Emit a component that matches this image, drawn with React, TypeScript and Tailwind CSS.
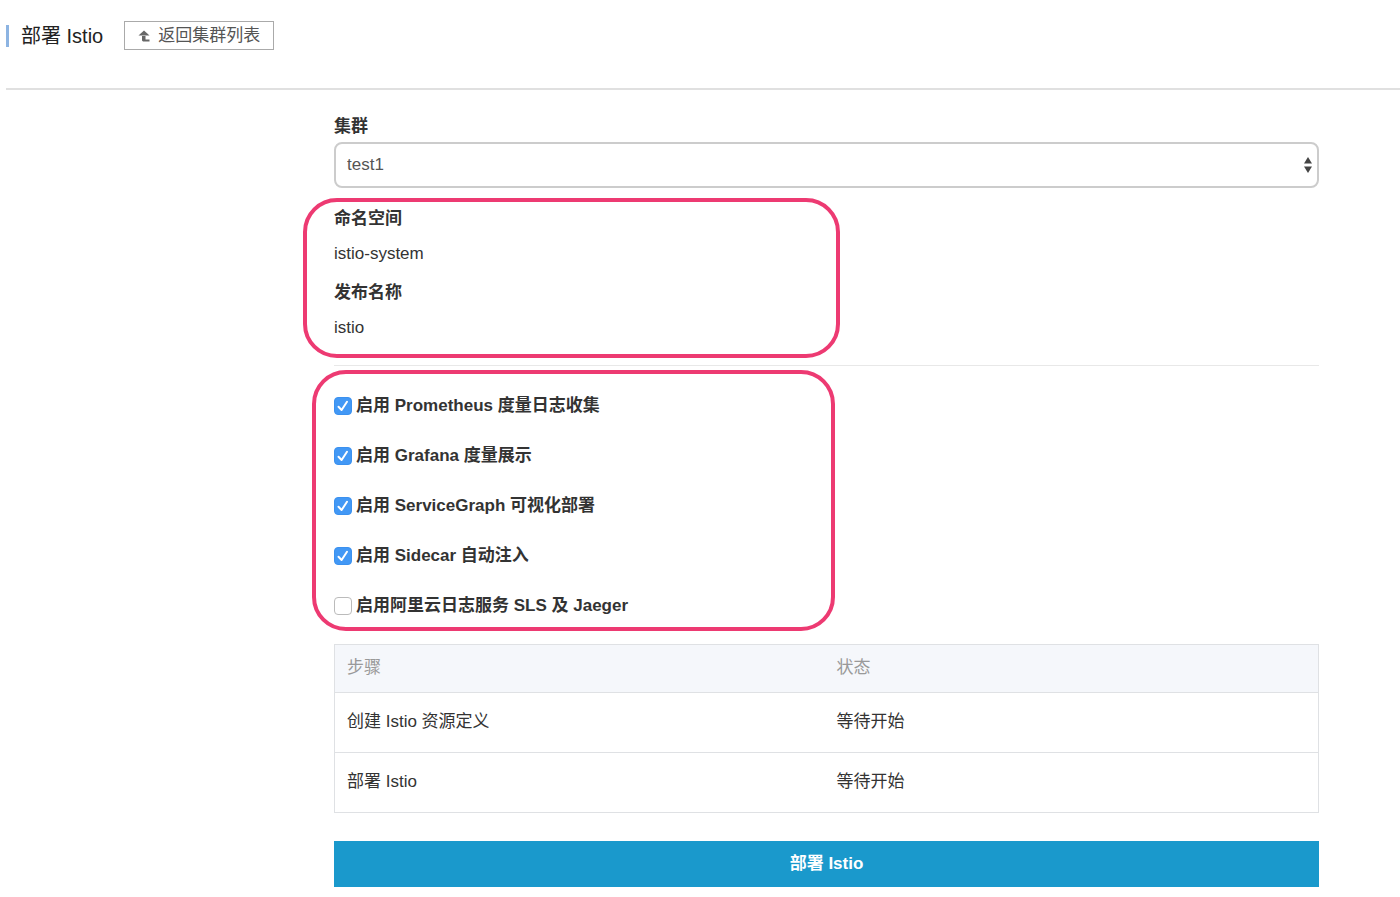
import { useState } from 'react';

interface FeatureOption {
  id: string;
  label: string;
  enabled: boolean;
}

interface DeployStep {
  name: string;
  status: string;
}

const INITIAL_OPTIONS: FeatureOption[] = [
  { id: 'prometheus', label: '启用 Prometheus 度量日志收集', enabled: true },
  { id: 'grafana', label: '启用 Grafana 度量展示', enabled: true },
  { id: 'servicegraph', label: '启用 ServiceGraph 可视化部署', enabled: true },
  { id: 'sidecar', label: '启用 Sidecar 自动注入', enabled: true },
  { id: 'sls', label: '启用阿里云日志服务 SLS 及 Jaeger', enabled: false },
];

const STEPS: DeployStep[] = [
  { name: '创建 Istio 资源定义', status: '等待开始' },
  { name: '部署 Istio', status: '等待开始' },
];

function BackIcon() {
  return (
    <svg viewBox="0 0 12 12" className="h-3 w-3" fill="#666" aria-hidden="true">
      <path d="M6 0.5 L11.5 5.5 H0.5 Z" />
      <path d="M4 6 H7.5 V9.5 H11.5 V11.5 H5 L4 10.5 Z" />
    </svg>
  );
}

function PageHeader() {
  return (
    <header className="ml-1.5 flex items-start border-b-2 border-[#e0e0e0] pt-5 pb-[37px]">
      <div className="flex h-[31px] items-center">
        <span className="h-[22px] w-[3px] bg-[#8db4e2]" />
        <h1 className="ml-3 text-[20px] leading-6 text-[#222]">部署 Istio</h1>
        <a
          href="#clusters"
          className="ml-[21px] flex h-[29px] items-center gap-2 border border-[#aaa] px-[13px] text-[17px] text-[#555]"
        >
          <BackIcon />
          返回集群列表
        </a>
      </div>
    </header>
  );
}

function ClusterSelect() {
  return (
    <div>
      <label htmlFor="cluster" className="block font-bold">
        集群
      </label>
      <div className="relative mt-[3px]">
        <select
          id="cluster"
          defaultValue="test1"
          className="block h-[46px] w-full appearance-none rounded-lg border-2 border-[#ccc] bg-white px-[11px] text-[#555]"
        >
          <option value="test1">test1</option>
        </select>
        <svg
          viewBox="0 0 8 16"
          className="pointer-events-none absolute top-[15px] right-[7px] h-4 w-2"
          fill="#444"
          aria-hidden="true"
        >
          <path d="M4 0 L8 6.5 H0 Z" />
          <path d="M4 16 L0 9.5 H8 Z" />
        </svg>
      </div>
    </div>
  );
}

function ReleaseInfo() {
  return (
    <div className="relative mt-[19px]">
      {/* Highlight frame */}
      <div className="pointer-events-none absolute -top-[9px] -left-[31px] h-[160px] w-[537px] rounded-[34px] border-4 border-[#ed3a72]" />
      <dl>
        <dt className="font-bold">命名空间</dt>
        <dd className="mt-[11px]">istio-system</dd>
        <dt className="mt-[15px] font-bold">发布名称</dt>
        <dd className="mt-[11px]">istio</dd>
      </dl>
    </div>
  );
}

interface OptionRowProps {
  option: FeatureOption;
  onToggle: (id: string) => void;
}

function OptionRow({ option, onToggle }: OptionRowProps) {
  return (
    <label htmlFor={option.id} className="flex items-center gap-1 font-bold">
      <span className="relative flex h-[18px] w-[18px]">
        <input
          id={option.id}
          type="checkbox"
          checked={option.enabled}
          onChange={() => onToggle(option.id)}
          className="h-full w-full appearance-none rounded border border-[#bbb] bg-white checked:border-[#3b91ef] checked:bg-[#4298f5]"
        />
        {option.enabled && (
          <svg
            viewBox="0 0 18 18"
            className="pointer-events-none absolute inset-0"
            fill="none"
            stroke="white"
            strokeWidth="2"
            strokeLinecap="round"
            strokeLinejoin="round"
            aria-hidden="true"
          >
            <path d="M4.5 9.8 L7.6 13 L13 4.8" />
          </svg>
        )}
      </span>
      {option.label}
    </label>
  );
}

function StepsTable() {
  return (
    <table className="mt-[26px] w-full table-fixed border-collapse border border-[#dfe1e4] text-left">
      <thead className="bg-[#f5f7fb] text-[#999]">
        <tr className="h-12">
          <th className="w-1/2 px-3 pb-0.5 font-normal">步骤</th>
          <th className="w-1/2 px-2.5 pb-0.5 font-normal">状态</th>
        </tr>
      </thead>
      <tbody>
        {STEPS.map((step) => (
          <tr key={step.name} className="h-[60px] border-t border-[#dfe1e4]">
            <td className="px-3 pb-0.5">{step.name}</td>
            <td className="px-2.5 pb-0.5">{step.status}</td>
          </tr>
        ))}
      </tbody>
    </table>
  );
}

export default function App() {
  const [options, setOptions] = useState(INITIAL_OPTIONS);

  const handleToggle = (id: string) => {
    setOptions((prev) =>
      prev.map((option) => (option.id === id ? { ...option, enabled: !option.enabled } : option))
    );
  };

  return (
    <div className="min-h-screen bg-white font-['Liberation_Sans','Noto_Sans_CJK_SC',sans-serif] text-[17px] leading-6 text-[#333]">
      <PageHeader />

      <main className="grid grid-cols-[334fr_985fr_81fr] pt-[25px] pb-2.5">
        <form className="col-start-2 min-w-0" onSubmit={(e) => e.preventDefault()}>
          <ClusterSelect />
          <ReleaseInfo />

          <hr className="mt-[25px] border-[#e8e8e8]" />

          <div className="relative mt-7">
            {/* Highlight frame */}
            <div className="pointer-events-none absolute -top-6 -left-[22px] h-[261px] w-[523px] rounded-[34px] border-4 border-[#ed3a72]" />
            <div className="flex flex-col items-start gap-[26px]">
              {options.map((option) => (
                <OptionRow key={option.id} option={option} onToggle={handleToggle} />
              ))}
            </div>
          </div>

          <StepsTable />

          <button type="submit" className="mt-7 block h-[46px] w-full bg-[#1a99cc] font-bold text-white">
            部署 Istio
          </button>
        </form>
      </main>
    </div>
  );
}
